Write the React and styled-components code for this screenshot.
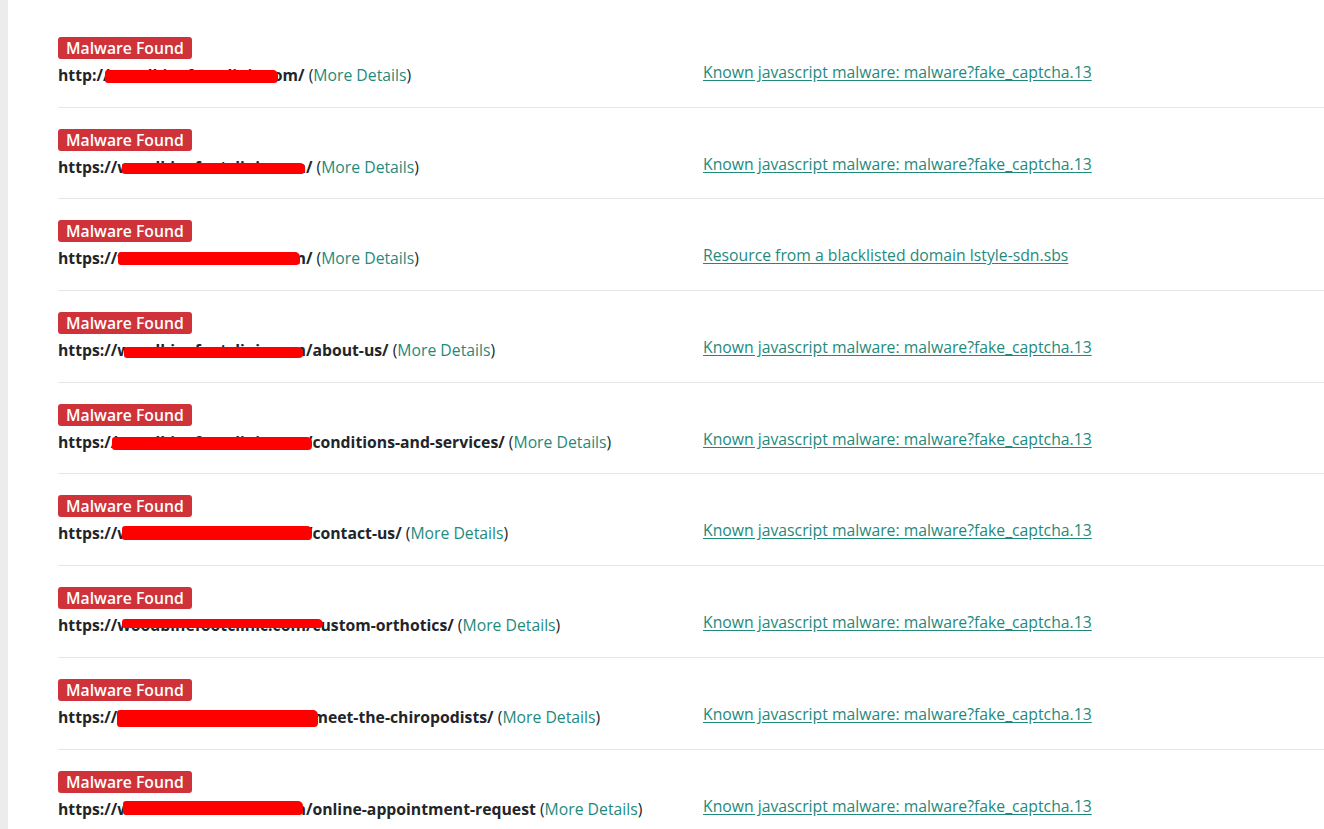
import styled, { createGlobalStyle } from "styled-components";

const GlobalStyle = createGlobalStyle`
  html, body {
    margin: 0;
    padding: 0;
    background: #ffffff;
  }
  body {
    font-family: "Open Sans", "Noto Sans", sans-serif;
    color: #212529;
  }
`;

const colors = {
  danger: "#cf3339",
  teal: "#1f8a7c",
  text: "#212529",
  rule: "#e6e6e6",
  strip: "#ececec",
};

const Page = styled.div`
  display: flex;
  min-height: 829px;
  overflow: hidden;
`;

const EdgeStrip = styled.aside`
  width: 8px;
  flex-shrink: 0;
  background-color: ${colors.strip};
`;

const Main = styled.main`
  flex: 1;
  padding: 16px 0 0 50px;
`;

const ResultRow = styled.div`
  display: grid;
  grid-template-columns: 645px 1fr;
  align-items: start;
  padding: 21px 0 19.7px;
  border-bottom: 1px solid ${colors.rule};
`;

const UrlCell = styled.div`
  display: flex;
  flex-direction: column;
  align-items: flex-start;
`;

const Badge = styled.span`
  display: inline-block;
  height: 22px;
  padding: 0 8px;
  line-height: 22px;
  border-radius: 3px;
  background-color: ${colors.danger};
  color: #ffffff;
  font-size: 15.75px;
  font-weight: 600;
  white-space: nowrap;
`;

const UrlLine = styled.div`
  position: relative;
  margin-top: 4px;
  font-size: 15.75px;
  line-height: 24px;
  white-space: nowrap;
`;

const Url = styled.strong`
  font-weight: 700;
  color: ${colors.text};
`;

const DetailsLink = styled.a`
  color: ${colors.teal};
  text-decoration: none;
`;

const Redaction = styled.span`
  position: absolute;
  background-color: #ff0000;
  border-radius: 3px 5px 4px 3px;
  pointer-events: none;
`;

const ReasonLink = styled.a`
  margin-top: 23px;
  font-size: 15.75px;
  line-height: 24px;
  color: ${colors.teal};
  text-decoration: underline;
  text-underline-offset: 2px;
  white-space: nowrap;
`;

const KNOWN = "Known javascript malware: malware?fake_captcha.13";

// redaction boxes: x from url start, top/bottom relative to the baseline
const results = [
  { url: "http://woodbinefootclinic.com/", reason: KNOWN, mark: [47, 220, -11, 2] },
  { url: "https://woodbinefootclinic.com/", reason: KNOWN, mark: [64, 247, -10, 1] },
  {
    url: "https://woodbinefootclinic.com/",
    reason: "Resource from a blacklisted domain lstyle-sdn.sbs",
    mark: [60, 242, -12, 1],
  },
  { url: "https://woodbinefootclinic.com/about-us/", reason: KNOWN, mark: [66, 245, -9, 2] },
  {
    url: "https://woodbinefootclinic.com/conditions-and-services/",
    reason: KNOWN,
    mark: [54, 254, -11, 2],
  },
  { url: "https://woodbinefootclinic.com/contact-us/", reason: KNOWN, mark: [64, 254, -13, 1] },
  {
    url: "https://woodbinefootclinic.com/custom-orthotics/",
    reason: KNOWN,
    mark: [64, 265, -12, -3],
  },
  {
    url: "https://woodbinefootclinic.com/meet-the-chiropodists/",
    reason: KNOWN,
    mark: [59, 260, -13, 4],
  },
  {
    url: "https://woodbinefootclinic.com/online-appointment-request",
    reason: KNOWN,
    mark: [65, 245, -14, 0],
  },
];

const BASELINE = 18;

const App = () => {
  return (
    <>
      <GlobalStyle />
      <Page>
        <EdgeStrip />
        <Main>
          {results.map((item, i) => {
            const [x1, x2, top, bottom] = item.mark;
            return (
              <ResultRow key={i}>
                <UrlCell>
                  <Badge>Malware Found</Badge>
                  <UrlLine>
                    <Url>{item.url}</Url> (<DetailsLink href="#">More Details</DetailsLink>)
                    <Redaction
                      style={{
                        left: x1,
                        width: x2 - x1,
                        top: BASELINE + top,
                        height: bottom - top,
                      }}
                    />
                  </UrlLine>
                </UrlCell>
                <ReasonLink href="#">{item.reason}</ReasonLink>
              </ResultRow>
            );
          })}
        </Main>
      </Page>
    </>
  );
};

export default App;
